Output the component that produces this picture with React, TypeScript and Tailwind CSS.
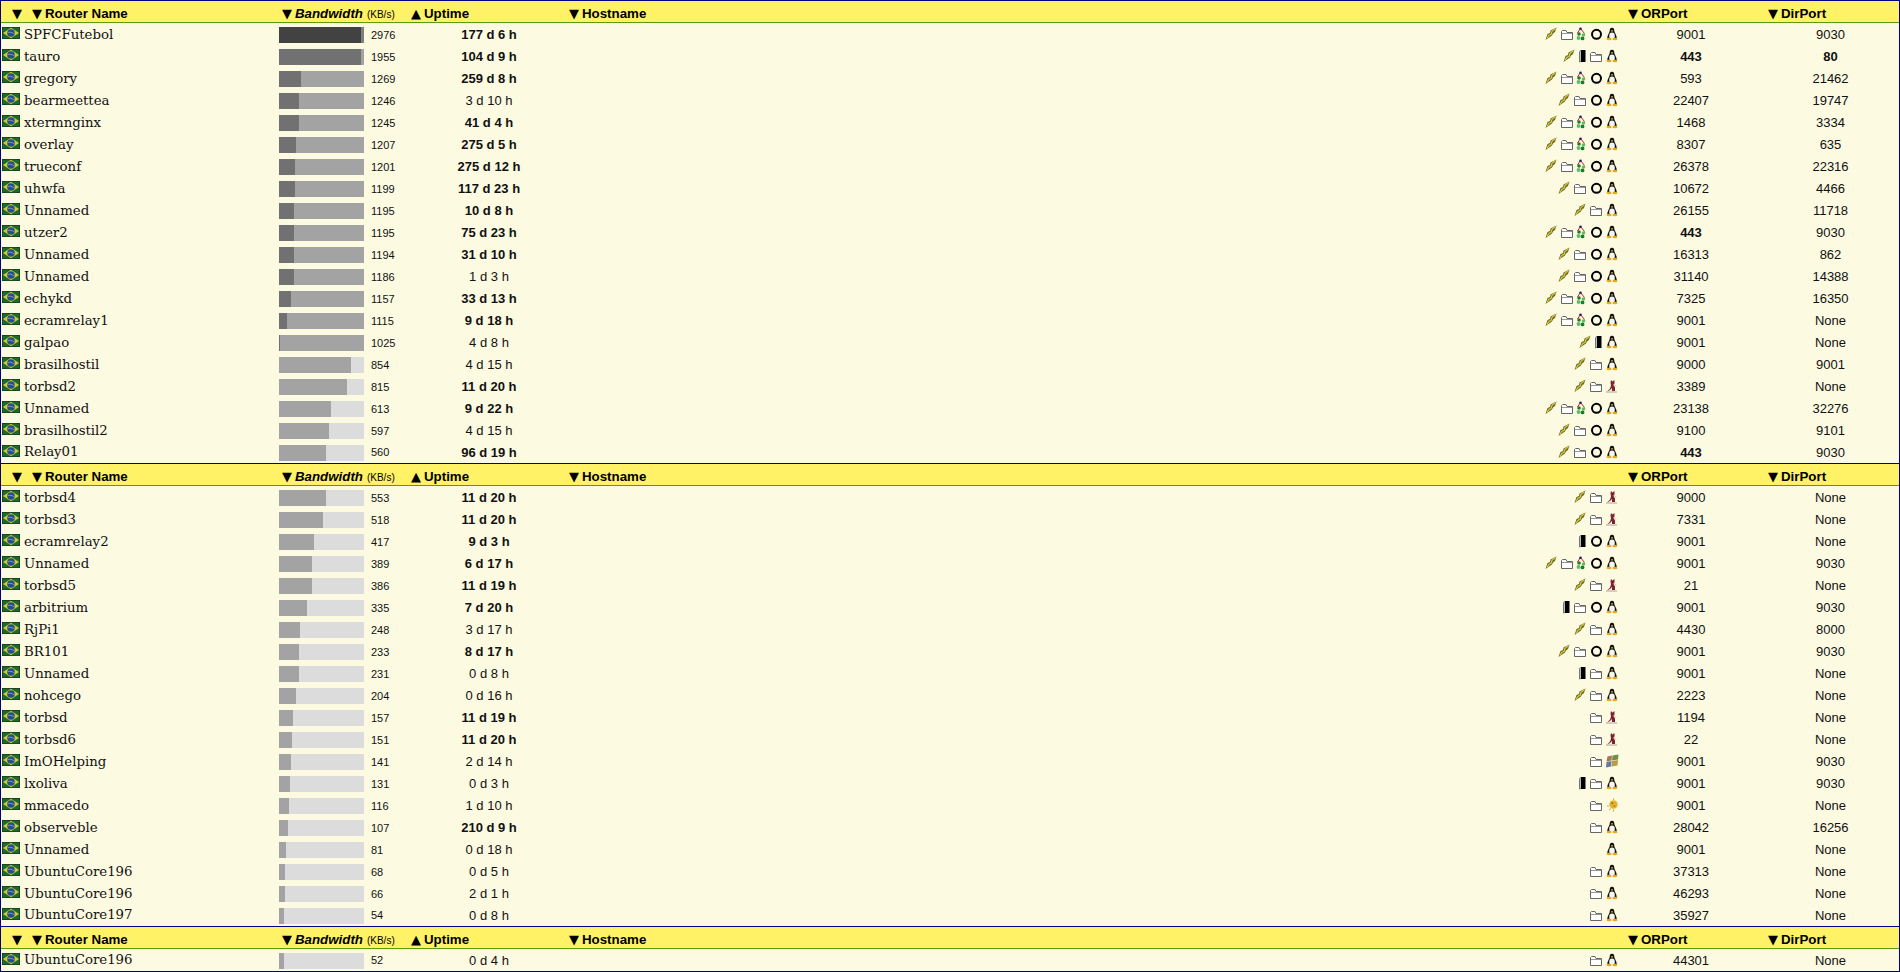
const cols = 'grid grid-cols-[278px_131px_158px_1059px_140px_1fr]';

type Relay = [string, number, string, boolean, string, number, number];

// icons: L fast, D exit, F dir, G guard stack, C ring, P tux, B bsd, W windows, S sun
const groups: Relay[][] = [
  [
    ['SPFCFutebol', 2976, '177 d 6 h', true, 'LFGCP', 9001, 9030],
    ['tauro', 1955, '104 d 9 h', true, 'LDFP', 443, 80],
    ['gregory', 1269, '259 d 8 h', true, 'LFGCP', 593, 21462],
    ['bearmeettea', 1246, '3 d 10 h', false, 'LFCP', 22407, 19747],
    ['xtermnginx', 1245, '41 d 4 h', true, 'LFGCP', 1468, 3334],
    ['overlay', 1207, '275 d 5 h', true, 'LFGCP', 8307, 635],
    ['trueconf', 1201, '275 d 12 h', true, 'LFGCP', 26378, 22316],
    ['uhwfa', 1199, '117 d 23 h', true, 'LFCP', 10672, 4466],
    ['Unnamed', 1195, '10 d 8 h', true, 'LFP', 26155, 11718],
    ['utzer2', 1195, '75 d 23 h', true, 'LFGCP', 443, 9030],
    ['Unnamed', 1194, '31 d 10 h', true, 'LFCP', 16313, 862],
    ['Unnamed', 1186, '1 d 3 h', false, 'LFCP', 31140, 14388],
    ['echykd', 1157, '33 d 13 h', true, 'LFGCP', 7325, 16350],
    ['ecramrelay1', 1115, '9 d 18 h', true, 'LFGCP', 9001, 0],
    ['galpao', 1025, '4 d 8 h', false, 'LDP', 9001, 0],
    ['brasilhostil', 854, '4 d 15 h', false, 'LFP', 9000, 9001],
    ['torbsd2', 815, '11 d 20 h', true, 'LFB', 3389, 0],
    ['Unnamed', 613, '9 d 22 h', true, 'LFGCP', 23138, 32276],
    ['brasilhostil2', 597, '4 d 15 h', false, 'LFCP', 9100, 9101],
    ['Relay01', 560, '96 d 19 h', true, 'LFCP', 443, 9030],
  ],
  [
    ['torbsd4', 553, '11 d 20 h', true, 'LFB', 9000, 0],
    ['torbsd3', 518, '11 d 20 h', true, 'LFB', 7331, 0],
    ['ecramrelay2', 417, '9 d 3 h', true, 'DCP', 9001, 0],
    ['Unnamed', 389, '6 d 17 h', true, 'LFGCP', 9001, 9030],
    ['torbsd5', 386, '11 d 19 h', true, 'LFB', 21, 0],
    ['arbitrium', 335, '7 d 20 h', true, 'DFCP', 9001, 9030],
    ['RjPi1', 248, '3 d 17 h', false, 'LFP', 4430, 8000],
    ['BR101', 233, '8 d 17 h', true, 'LFCP', 9001, 9030],
    ['Unnamed', 231, '0 d 8 h', false, 'DFP', 9001, 0],
    ['nohcego', 204, '0 d 16 h', false, 'LFP', 2223, 0],
    ['torbsd', 157, '11 d 19 h', true, 'FB', 1194, 0],
    ['torbsd6', 151, '11 d 20 h', true, 'FB', 22, 0],
    ['ImOHelping', 141, '2 d 14 h', false, 'FW', 9001, 9030],
    ['lxoliva', 131, '0 d 3 h', false, 'DFP', 9001, 9030],
    ['mmacedo', 116, '1 d 10 h', false, 'FS', 9001, 0],
    ['observeble', 107, '210 d 9 h', true, 'FP', 28042, 16256],
    ['Unnamed', 81, '0 d 18 h', false, 'P', 9001, 0],
    ['UbuntuCore196', 68, '0 d 5 h', false, 'FP', 37313, 0],
    ['UbuntuCore196', 66, '2 d 1 h', false, 'FP', 46293, 0],
    ['UbuntuCore197', 54, '0 d 8 h', false, 'FP', 35927, 0],
  ],
  [['UbuntuCore196', 52, '0 d 4 h', false, 'FP', 44301, 0]],
];

function Flag() {
  return (
    <svg width="18" height="12" viewBox="0 0 18 12" className="mb-[4px] shrink-0">
      <rect width="18" height="12" fill="#10281a" />
      <rect x="0.5" y="0.5" width="17" height="11" fill="#1f6a2a" />
      <polygon points="9,0.8 17,6 9,11.2 1,6" fill="#cfcb34" />
      <circle cx="9" cy="6" r="3.8" fill="#234f8c" />
      <path d="M5.6 5.4 Q9 4.4 12.4 6.8" stroke="#8fa8c4" strokeWidth="0.8" fill="none" />
    </svg>
  );
}

function Bolt() {
  return (
    <svg width="16" height="16" viewBox="0 0 16 16">
      <polygon points="13.5,1.5 7.5,4.5 7,7 4.5,8 2.5,14 9,9.5 10,7.5 12,6" fill="#6f6c20" />
      <polyline points="12.5,2.5 8.8,5.5 8.3,8 5.8,9.5 4,12.5" fill="none" stroke="#d4c84c" strokeWidth="1.2" />
    </svg>
  );
}

function Door() {
  return (
    <svg width="11" height="16" viewBox="0 0 11 16">
      <path d="M2.5 3.5 L4 2.5 V13.5 L2.5 14 Z" fill="#fff" stroke="#777" strokeWidth="1" />
      <rect x="4" y="2" width="4.5" height="12" fill="#000" />
    </svg>
  );
}

function Folder() {
  return (
    <svg width="16" height="16" viewBox="0 0 16 16">
      <path d="M2.5 5.5 V13.5 H13.5 V6.5 H8 L7 4.5 H3.5 Z" fill="#fff" stroke="#666" strokeWidth="1" />
      <path d="M3 7.5 H13" stroke="#999" strokeWidth="1" />
    </svg>
  );
}

function Stack() {
  return (
    <svg width="13" height="16" viewBox="0 0 13 16">
      <path d="M5.5 2.5 L2.5 7 M5.5 2.5 L9.5 7.5" stroke="#c82020" strokeWidth="1" />
      <circle cx="5.5" cy="2.8" r="1.3" fill="#16226e" />
      <circle cx="4" cy="8" r="1.8" fill="#1e7a30" />
      <circle cx="8.5" cy="9" r="1.8" fill="#5cc060" />
      <circle cx="3.5" cy="12" r="1.9" fill="#5cc060" />
      <circle cx="7.5" cy="12.4" r="1.9" fill="#1e7a30" />
    </svg>
  );
}

function Ring() {
  return (
    <svg width="16" height="16" viewBox="0 0 16 16">
      <circle cx="8.5" cy="8.3" r="4.5" fill="none" stroke="#000" strokeWidth="2" />
    </svg>
  );
}

function Tux() {
  return (
    <svg width="16" height="16" viewBox="0 0 16 16">
      <path d="M8 1.8 C6 1.8 5.7 3.6 5.7 5 C5.7 6.6 3.2 9 3.2 12.5 H12.8 C12.8 9 10.3 6.6 10.3 5 C10.3 3.6 10 1.8 8 1.8 Z" fill="#111" />
      <ellipse cx="8" cy="10" rx="2.8" ry="3.4" fill="#f4f4f0" />
      <ellipse cx="5" cy="13" rx="2.5" ry="1.3" fill="#e8a81c" />
      <ellipse cx="11" cy="13" rx="2.5" ry="1.3" fill="#e8a81c" />
      <circle cx="8" cy="4.8" r="0.9" fill="#e8b830" />
    </svg>
  );
}

function Bsd() {
  return (
    <svg width="16" height="16" viewBox="0 0 16 16">
      <path d="M7 2 L8.5 3.5 L10.5 2 L10.5 5.5 L9.5 7 L11 9.5 L11 13 H8 L8 10 L6 12 L3 13.5 L6 10.5 L7 7.5 L6.5 4.5 Z" fill="#7c2530" />
      <path d="M9.5 6 L12 8.5" stroke="#d8b8a8" strokeWidth="1" />
      <path d="M2 14 H13" stroke="#b0a098" strokeWidth="1" />
    </svg>
  );
}

function Windows() {
  return (
    <svg width="16" height="16" viewBox="0 0 16 16">
      <polygon points="3.5,3.5 8,2.5 7.5,7.5 2.5,8.5" fill="#a8745a" />
      <polygon points="8.5,2.5 14.5,1.5 14,6.5 8,7.5" fill="#6f8f48" />
      <polygon points="2.5,9 7.5,8 7,13.5 2,14.5" fill="#6678a0" />
      <polygon points="8,8 14,7 13.5,12.5 7.5,13.5" fill="#b89c48" />
    </svg>
  );
}

function Sun() {
  return (
    <svg width="16" height="16" viewBox="0 0 16 16">
      <circle cx="9.5" cy="7.5" r="4.2" fill="#e6b42c" />
      <circle cx="8.3" cy="6.3" r="1" fill="#8a6a20" />
      <circle cx="10.5" cy="9" r="0.8" fill="#8a6a20" />
      <path d="M3 9 H5 M5 13 L7 11.5 M9.5 14.5 V12.5 M9.5 1.5 V3" stroke="#d8a030" strokeWidth="1" />
    </svg>
  );
}

const icons: Record<string, () => React.JSX.Element> = {
  L: Bolt, D: Door, F: Folder, G: Stack, C: Ring, P: Tux, B: Bsd, W: Windows, S: Sun,
};

function Arrow({ up }: { up?: boolean }) {
  return <span className="font-['DejaVu_Sans',sans-serif] text-[13px]">{up ? '▲' : '▼'}</span>;
}

function Header() {
  return (
    <div className={`${cols} mb-[1px] h-[22px] overflow-hidden bg-[#fff266] border-b border-[#5f9a0c] pt-[3px] text-[13.3px] font-bold leading-[20px] text-black`}>
      <div className="flex pl-[11px] gap-[10px]">
        <Arrow />
        <span className="flex gap-[3px]"><Arrow /> Router Name</span>
      </div>
      <div className="flex items-baseline gap-[3px] pl-[3px]">
        <Arrow />
        <span className="italic">Bandwidth</span>
        <span className="ml-[1px] text-[10px] font-normal">(KB/s)</span>
      </div>
      <div className="flex gap-[3px] pl-[1px]"><Arrow up /> Uptime</div>
      <div className="flex gap-[3px] pl-[1px]"><Arrow /> Hostname</div>
      <div className="flex gap-[3px] pl-[1px]"><Arrow /> ORPort</div>
      <div className="flex gap-[3px] pl-[1px]"><Arrow /> DirPort</div>
    </div>
  );
}

function Bar({ bw }: { bw: number }) {
  // scale wraps every 1024 KB/s, each wrap one shade darker
  const over = bw >= 2048 ? 2 : bw > 1024 ? 1 : 0;
  const width = over ? Math.ceil((bw - over * 1024) * 0.0875) : Math.ceil(bw / 12);
  const fill = ['bg-[#a3a3a3]', 'bg-[#717171]', 'bg-[#424242]'][over];
  const track = ['bg-[#dcdcdc]', 'bg-[#a3a3a3]', 'bg-[#7f7f7f]'][over];
  return (
    <div className={`h-4 w-[85px] ${track}`}>
      <div className={`h-4 ${fill}`} style={{ width }} />
    </div>
  );
}

function Row({ r, last }: { r: Relay; last: boolean }) {
  const [name, bw, up, stable, flags, or, dir] = r;
  return (
    <div className={`${cols} h-[22px] items-center text-[13px] text-[#111] ${last ? 'border-b border-[#000080]' : ''}`}>
      <div className="flex items-center gap-[4px] pl-[1px] font-['DejaVu_Serif',serif] text-[13.3px]">
        <Flag />
        <span className="-mt-[1px]">{name}</span>
      </div>
      <div className="flex items-center">
        <Bar bw={bw} />
        <span className="ml-[7px] text-[11px]">{bw}</span>
      </div>
      <div className={`text-center ${stable ? 'font-bold' : ''}`}>{up}</div>
      <div className="flex justify-end pr-[7px] -mt-[2px]">
        {flags.split('').map((f, i) => {
          const Icon = icons[f];
          return <Icon key={i} />;
        })}
      </div>
      <div className={`pr-[12px] text-center ${or === 443 ? 'font-bold' : ''}`}>{or}</div>
      <div className={`pr-[5px] text-center ${dir === 80 ? 'font-bold' : ''}`}>{dir || 'None'}</div>
    </div>
  );
}

export default function App() {
  return (
    <div className="bg-[#fcfae1] border-x border-t border-[#000080] font-['Liberation_Sans',sans-serif]">
      {groups.map((rows, g) => (
        <div key={g}>
          <Header />
          {rows.map((r, i) => (
            <Row key={i} r={r} last={i === rows.length - 1} />
          ))}
        </div>
      ))}
    </div>
  );
}
